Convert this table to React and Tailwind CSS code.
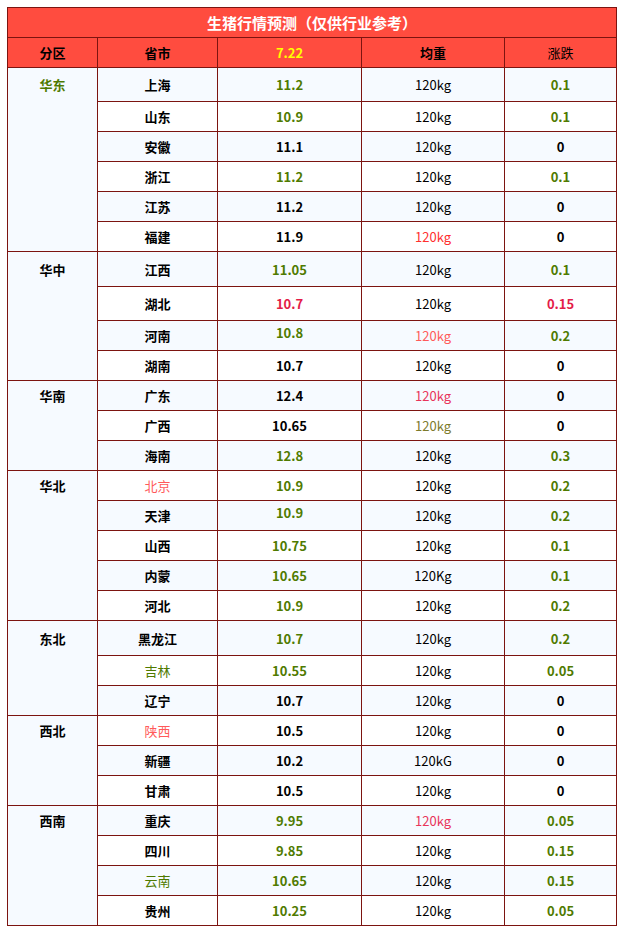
import React from 'react';

// colours taken from the screenshot
const K = 'text-black';
const G = 'text-[#4f7a00]';
const CR = 'text-[#e31c48]';
const RD = 'text-[#ff2f2f]';
const PK = 'text-[#ff5a5a]';
const PN = 'text-[#e8345a]';
const OL = 'text-[#7d7a2c]';

// p: province, v: price, w: weight, c: change; *c = colour
const regions = [
  {
    name: '华东', color: G,
    rows: [
      { p: '上海', v: '11.2', vc: G, c: '0.1', cc: G, h: 'h-[34px]' },
      { p: '山东', v: '10.9', vc: G, c: '0.1', cc: G },
      { p: '安徽', v: '11.1', c: '0' },
      { p: '浙江', v: '11.2', vc: G, c: '0.1', cc: G },
      { p: '江苏', v: '11.2', c: '0' },
      { p: '福建', v: '11.9', wc: RD, c: '0' },
    ],
  },
  {
    name: '华中',
    rows: [
      { p: '江西', v: '11.05', vc: G, c: '0.1', cc: G, h: 'h-[35px]' },
      { p: '湖北', v: '10.7', vc: CR, c: '0.15', cc: CR, h: 'h-[34px]' },
      { p: '河南', v: '10.8', vc: G, wc: PK, c: '0.2', cc: G, up: true },
      { p: '湖南', v: '10.7', c: '0' },
    ],
  },
  {
    name: '华南',
    rows: [
      { p: '广东', v: '12.4', wc: PN, c: '0' },
      { p: '广西', v: '10.65', wc: OL, c: '0' },
      { p: '海南', v: '12.8', vc: G, c: '0.3', cc: G },
    ],
  },
  {
    name: '华北',
    rows: [
      { p: '北京', pc: PK, v: '10.9', vc: G, c: '0.2', cc: G },
      { p: '天津', v: '10.9', vc: G, c: '0.2', cc: G, up: true },
      { p: '山西', v: '10.75', vc: G, c: '0.1', cc: G },
      { p: '内蒙', v: '10.65', vc: G, w: '120Kg', c: '0.1', cc: G },
      { p: '河北', v: '10.9', vc: G, c: '0.2', cc: G },
    ],
  },
  {
    name: '东北',
    rows: [
      { p: '黑龙江', v: '10.7', vc: G, c: '0.2', cc: G, h: 'h-[35px]' },
      { p: '吉林', pc: G, v: '10.55', vc: G, c: '0.05', cc: G },
      { p: '辽宁', v: '10.7', c: '0' },
    ],
  },
  {
    name: '西北',
    rows: [
      { p: '陕西', pc: PK, v: '10.5', c: '0' },
      { p: '新疆', v: '10.2', w: '120kG', c: '0' },
      { p: '甘肃', v: '10.5', c: '0' },
    ],
  },
  {
    name: '西南',
    rows: [
      { p: '重庆', v: '9.95', vc: G, wc: PN, c: '0.05', cc: G },
      { p: '四川', v: '9.85', vc: G, c: '0.15', cc: G },
      { p: '云南', pc: G, v: '10.65', vc: G, c: '0.15', cc: G },
      { p: '贵州', v: '10.25', vc: G, c: '0.05', cc: G },
    ],
  },
];

const labelH = {
  'h-[30px]': 'h-[29px]',
  'h-[34px]': 'h-[33px]',
  'h-[35px]': 'h-[34px]',
};

const cell = 'flex items-center justify-center border-r border-[#7c1410]';

const Row = ({ r, light }) => (
  <div className={`flex border-b border-[#7c1410] ${r.h || 'h-[30px]'} ${light ? 'bg-[#f6faff]' : 'bg-white'}`}>
    <div className={`${cell} w-[120px] ${r.pc ? `${r.pc} font-normal` : `${K} font-bold`}`}>{r.p}</div>
    <div className={`${cell} w-[144px] font-bold ${r.vc || K} ${r.up ? 'pb-[6px]' : ''}`}>{r.v}</div>
    <div className={`${cell} w-[143px] ${r.wc || K}`}>{r.w || '120kg'}</div>
    <div className={`flex flex-1 items-center justify-center font-bold ${r.cc || K}`}>{r.c}</div>
  </div>
);

export default function App() {
  let idx = 0;
  return (
    <div className="bg-white min-h-[931px] pt-[7px] pl-[7px]">
      <div
        className="w-[610px] border-t border-l border-r border-[#7c1410] text-[13px] leading-none"
        style={{ fontFamily: '"Noto Sans CJK SC", "Noto Sans", sans-serif' }}
      >
        <div className="h-[30px] flex items-center justify-center bg-[#ff4c3f] border-b border-[#7c1410] text-white font-bold text-[15px]">
          生猪行情预测（仅供行业参考）
        </div>
        <div className="h-[30px] flex bg-[#ff4c3f] border-b border-[#7c1410] font-bold">
          <div className={`${cell} w-[90px]`}>分区</div>
          <div className={`${cell} w-[120px]`}>省市</div>
          <div className={`${cell} w-[144px] text-[#ffff00]`}>7.22</div>
          <div className={`${cell} w-[143px]`}>均重</div>
          <div className="flex flex-1 items-center justify-center font-normal">涨跌</div>
        </div>
        {regions.map((g) => (
          <div key={g.name} className="flex">
            <div className="w-[90px] bg-[#f6faff] border-r border-b border-[#7c1410]">
              <div className={`${labelH[g.rows[0].h || 'h-[30px]']} flex items-center justify-center font-bold ${g.color || K}`}>
                {g.name}
              </div>
            </div>
            <div className="flex-1 flex flex-col">
              {g.rows.map((r) => {
                const light = idx % 2 === 0;
                idx += 1;
                return <Row key={r.p} r={r} light={light} />;
              })}
            </div>
          </div>
        ))}
      </div>
    </div>
  );
}
